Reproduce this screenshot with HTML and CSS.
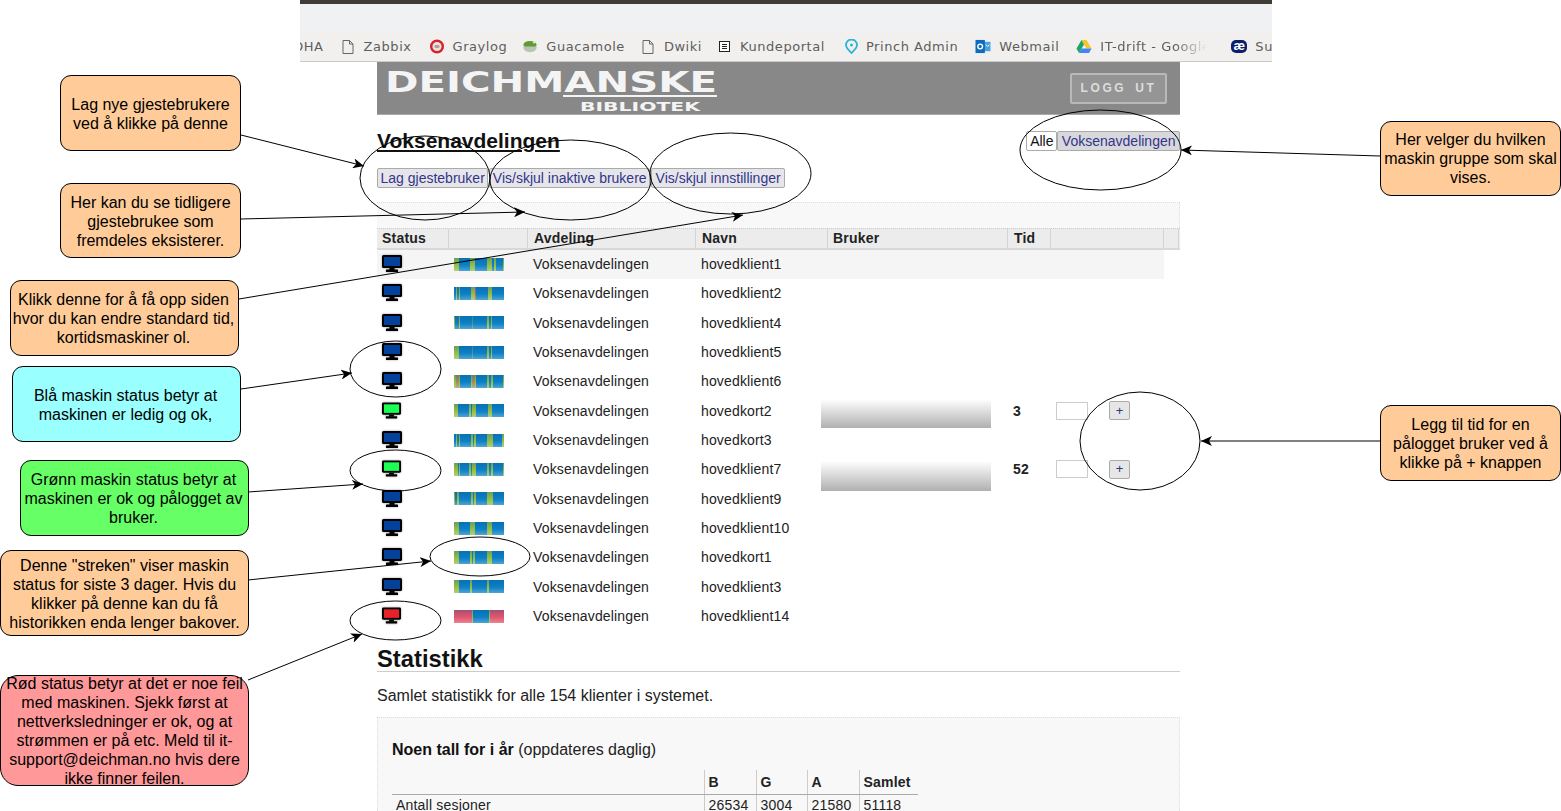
FILE: index.html
```html
<!DOCTYPE html>
<html lang="no">
<head>
<meta charset="utf-8">
<title>Deichmanske - klienter</title>
<link rel="stylesheet" href="styles.css">
</head>
<body>
<svg width="0" height="0" class="defs">
  <symbol id="mon" viewBox="0 0 20 17">
    <rect x="0" y="0" width="20" height="13" rx="1.5" fill="#000"/>
    <rect x="2" y="2" width="16" height="9" fill="currentColor"/>
    <rect x="7.5" y="13" width="5" height="2" fill="#000"/>
    <rect x="4" y="14.5" width="12" height="2.5" rx="0.6" fill="#000"/>
  </symbol>
  <symbol id="file" viewBox="0 0 12 14">
    <path d="M1 .5h6.500L11 4v9.500H1zM7.500 .5V4H11" fill="none" stroke="#666" stroke-width="1"/>
  </symbol>
</svg>

<div class="shot">
  <div class="topline"></div>
  <div class="urlbar"></div>
  <nav class="bookmarks">
    <span class="bm bm-first">OHA</span>
    <span class="bm bm-wide"><svg class="ic-file"><use href="#file"/></svg>Zabbix</span>
    <span class="bm bm-tight"><svg class="ic" viewBox="0 0 16 16"><circle cx="8" cy="8" r="6.200" fill="#e8e4e4" stroke="#d8232a" stroke-width="2.600"/><ellipse cx="8" cy="8" rx="3" ry="1.800" fill="#b99"/></svg>Graylog</span>
    <span class="bm"><svg class="ic" viewBox="0 0 16 16"><ellipse cx="8" cy="6" rx="7" ry="4" fill="#5f9a35"/><path d="M.8 8h14.400c0 4-3 6-7.200 6S.8 12 .8 8z" fill="#b8c4b4"/><circle cx="12.500" cy="3.500" r="1.400" fill="#e6e6c0"/></svg>Guacamole</span>
    <span class="bm bm-wide"><svg class="ic-file"><use href="#file"/></svg>Dwiki</span>
    <span class="bm bm-wide bm-doc"><svg class="ic-doc" viewBox="0 0 11 11"><rect x=".5" y=".5" width="10" height="10" fill="#fff" stroke="#222"/><path d="M3 3.500h5M3 5.500h5M3 7.500h5" stroke="#222"/></svg>Kundeportal</span>
    <span class="bm"><svg class="ic-pin" viewBox="0 0 13 15"><path d="M6.500 14C3.500 11 1 9 1 6a5.500 5.500 0 0 1 11 0c0 3-2.500 5-5.500 8z" fill="none" stroke="#2bb6d8" stroke-width="1.800"/><circle cx="6.500" cy="6" r="1.500" fill="#2bb6d8"/></svg>Princh Admin</span>
    <span class="bm"><svg class="ic" viewBox="0 0 16 16"><rect x="7" y="3" width="9" height="10" fill="#4aa3e0"/><rect x="0" y="1" width="10" height="14" fill="#0f6cbd"/><circle cx="5" cy="8" r="2.500" fill="none" stroke="#fff" stroke-width="1.500"/><path d="M11 6l2 2 2-2" stroke="#fff" fill="none"/></svg>Webmail</span>
    <span class="bm bm-fade"><svg class="ic" viewBox="0 0 16 15"><path d="M5.500 1h5l5 8.500h-5z" fill="#f8c52b"/><path d="M5.500 1L.5 9.500 3 14l5-8.500z" fill="#1fa463"/><path d="M3 14h10l2.500-4.500h-10z" fill="#4285f4"/></svg><span class="fade">IT-drift - Google</span></span>
    <span class="bm"><span class="ic-su">æ</span>Su</span>
  </nav>

  <main class="page">
    <header class="site-head">
      <svg class="logo" viewBox="0 0 345 53" width="345" height="53">
        <text x="8" y="30" class="logo-main" textLength="332" lengthAdjust="spacingAndGlyphs">DEICHMANSKE</text>
        <rect x="186" y="33" width="154" height="2" fill="#f4f4f4"/>
        <text x="203" y="49" class="logo-sub" textLength="120" lengthAdjust="spacingAndGlyphs">BIBLIOTEK</text>
      </svg>
      <a class="logout">LOGG UT</a>
    </header>

    <div class="title-row">
      <h1 class="title">Voksenavdelingen</h1>
      <div class="filters">
        <button class="btn btn-active">Alle</button><button class="btn btn-sel">Voksenavdelingen</button>
      </div>
    </div>

    <div class="toolbar">
      <button class="btn">Lag gjestebruker</button>
      <button class="btn">Vis/skjul inaktive brukere</button>
      <button class="btn btn-last">Vis/skjul innstillinger</button>
    </div>

    <div class="filter-panel"></div>

    <div class="thead">
      <div class="th">Status</div><div class="th"></div><div class="th">Avdeling</div><div class="th">Navn</div><div class="th">Bruker</div><div class="th">Tid</div><div class="th"></div><div class="th"></div>
    </div>

    <div class="row row-hl"><div class="c"><svg class="mon blue"><use href="#mon"/></svg></div><div class="c"><a class="bar h1"></a></div><div class="c">Voksenavdelingen</div><div class="c">hovedklient1</div></div>
    <div class="row"><div class="c"><svg class="mon blue"><use href="#mon"/></svg></div><div class="c"><a class="bar h2"></a></div><div class="c">Voksenavdelingen</div><div class="c">hovedklient2</div></div>
    <div class="row"><div class="c"><svg class="mon blue"><use href="#mon"/></svg></div><div class="c"><a class="bar h3"></a></div><div class="c">Voksenavdelingen</div><div class="c">hovedklient4</div></div>
    <div class="row"><div class="c"><svg class="mon blue"><use href="#mon"/></svg></div><div class="c"><a class="bar h4"></a></div><div class="c">Voksenavdelingen</div><div class="c">hovedklient5</div></div>
    <div class="row"><div class="c"><svg class="mon blue"><use href="#mon"/></svg></div><div class="c"><a class="bar h5"></a></div><div class="c">Voksenavdelingen</div><div class="c">hovedklient6</div></div>
    <div class="row"><div class="c"><svg class="mon green"><use href="#mon"/></svg></div><div class="c"><a class="bar h6"></a></div><div class="c">Voksenavdelingen</div><div class="c">hovedkort2</div>
      <div class="c"><div class="user-bar"></div></div><div class="c c-time">3</div><div class="c c-add"><input class="time" type="text"><button class="plus">+</button></div></div>
    <div class="row"><div class="c"><svg class="mon blue"><use href="#mon"/></svg></div><div class="c"><a class="bar h7"></a></div><div class="c">Voksenavdelingen</div><div class="c">hovedkort3</div></div>
    <div class="row"><div class="c"><svg class="mon green"><use href="#mon"/></svg></div><div class="c"><a class="bar h8"></a></div><div class="c">Voksenavdelingen</div><div class="c">hovedklient7</div>
      <div class="c"><div class="user-bar user-bar-low"></div></div><div class="c c-time">52</div><div class="c c-add"><input class="time" type="text"><button class="plus">+</button></div></div>
    <div class="row"><div class="c"><svg class="mon blue"><use href="#mon"/></svg></div><div class="c"><a class="bar h9"></a></div><div class="c">Voksenavdelingen</div><div class="c">hovedklient9</div></div>
    <div class="row"><div class="c"><svg class="mon blue"><use href="#mon"/></svg></div><div class="c"><a class="bar h10"></a></div><div class="c">Voksenavdelingen</div><div class="c">hovedklient10</div></div>
    <div class="row"><div class="c"><svg class="mon blue"><use href="#mon"/></svg></div><div class="c"><a class="bar h11"></a></div><div class="c">Voksenavdelingen</div><div class="c">hovedkort1</div></div>
    <div class="row"><div class="c"><svg class="mon blue"><use href="#mon"/></svg></div><div class="c"><a class="bar h12"></a></div><div class="c">Voksenavdelingen</div><div class="c">hovedklient3</div></div>
    <div class="row"><div class="c"><svg class="mon red"><use href="#mon"/></svg></div><div class="c"><a class="bar h13"></a></div><div class="c">Voksenavdelingen</div><div class="c">hovedklient14</div></div>

    <h2 class="stats-title">Statistikk</h2>
    <p class="stats-intro">Samlet statistikk for alle 154 klienter i systemet.</p>
    <section class="stats-panel">
      <h3 class="stats-head"><strong>Noen tall for i år</strong> (oppdateres daglig)</h3>
      <table class="stats-table">
        <colgroup><col class="col-label"><col class="col-b"><col class="col-g"><col class="col-a"><col class="col-s"></colgroup>
        <thead><tr><th></th><th>B</th><th>G</th><th>A</th><th>Samlet</th></tr></thead>
        <tbody><tr><td>Antall sesjoner</td><td>26534</td><td>3004</td><td>21580</td><td>51118</td></tr></tbody>
      </table>
    </section>
  </main>
</div>

<svg class="overlay" width="1561" height="811" viewBox="0 0 1561 811">
  <defs>
    <marker id="ah" markerWidth="12" markerHeight="10" refX="11" refY="5" orient="auto" markerUnits="userSpaceOnUse">
      <path d="M0 0L11 5L0 10L3 5z" fill="#000"/>
    </marker>
  </defs>
  <g class="ell">
    <ellipse cx="425" cy="178" rx="65" ry="42"/>
    <ellipse cx="570.500" cy="180" rx="80.500" ry="40"/>
    <ellipse cx="730.500" cy="173.500" rx="80.500" ry="40.500"/>
    <ellipse cx="1100.500" cy="150" rx="80.500" ry="40"/>
    <ellipse cx="395.500" cy="369" rx="45.500" ry="28"/>
    <ellipse cx="395.500" cy="470.500" rx="45.500" ry="20.500"/>
    <ellipse cx="480" cy="556.500" rx="50" ry="19.500"/>
    <ellipse cx="395.500" cy="620.500" rx="45.500" ry="19.500"/>
    <ellipse cx="1140" cy="441" rx="60" ry="49"/>
  </g>
  <g class="arr">
    <line x1="241" y1="135" x2="364" y2="166"/>
    <line x1="241" y1="219" x2="525" y2="212"/>
    <line x1="239" y1="299" x2="743" y2="215"/>
    <line x1="241" y1="389" x2="352" y2="373"/>
    <line x1="248" y1="492" x2="363" y2="484"/>
    <line x1="248" y1="580" x2="431" y2="561"/>
    <line x1="248" y1="680" x2="362" y2="634"/>
    <line x1="1380" y1="156" x2="1181" y2="150"/>
    <line x1="1380" y1="441" x2="1201" y2="441"/>
  </g>
</svg>

<div class="note n1">Lag nye gjestebrukere<br>ved å klikke på denne</div>
<div class="note n2">Her kan du se tidligere<br>gjestebrukee som<br>fremdeles eksisterer.</div>
<div class="note n3">Klikk denne for å få opp siden<br>hvor du kan endre standard tid,<br>kortidsmaskiner ol.</div>
<div class="note n4">Blå maskin status betyr at<br>maskinen er ledig og ok,</div>
<div class="note n5">Grønn maskin status betyr at<br>maskinen er ok og pålogget av<br>bruker.</div>
<div class="note n6">Denne "streken" viser maskin<br>status for siste 3 dager. Hvis du<br>klikker på denne kan du få<br>historikken enda lenger bakover.</div>
<div class="note n7">Rød status betyr at det er noe feil<br>med maskinen. Sjekk først at<br>nettverksledninger er ok, og at<br>strømmen er på etc. Meld til it-<br>support@deichman.no hvis dere<br>ikke finner feilen.</div>
<div class="note n8">Her velger du hvilken<br>maskin gruppe som skal<br>vises.</div>
<div class="note n9">Legg til tid for en<br>pålogget bruker ved å<br>klikke på + knappen</div>
</body>
</html>
```
FILE: styles.css
```css
* { box-sizing: border-box; }
html, body { margin: 0; padding: 0; }
body {
  position: relative;
  width: 1561px;
  height: 811px;
  overflow: hidden;
  background: #fff;
  font-family: "Liberation Sans", Arial, sans-serif;
  font-size: 14px;
  color: #222;
}
.defs { position: absolute; }

.shot { width: 972px; height: 811px; margin-left: 300px; overflow: hidden; }
.topline { height: 4px; background: #3f3c37; }
.urlbar { height: 28px; background: #eff1f2; }
.bookmarks {
  display: flex;
  align-items: center;
  gap: 17px;
  height: 30px;
  background: #f1f0ee;
  border-bottom: 1px solid #ccc;
  overflow: hidden;
  white-space: nowrap;
  font-family: "DejaVu Sans", sans-serif;
  font-size: 13px;
  letter-spacing: 0.55px;
  color: #5e5e5e;
}
.bm { display: inline-flex; align-items: center; gap: 8px; flex: none; }
.bm-wide { gap: 10px; }
.bm-first { margin-left: -7px; margin-right: 1px; }
.bm-tight { margin-right: -2px; }
.bm-doc { margin-right: 3px; }
.ic { width: 16px; height: 15px; flex: none; }
.ic-file { width: 12px; height: 14px; flex: none; }
.ic-doc { width: 11px; height: 11px; flex: none; }
.ic-pin { width: 13px; height: 15px; flex: none; }
.ic-su {
  width: 16px; height: 13px; flex: none; border-radius: 5px;
  background: #0c1f6b; color: #fff; font: bold 13px/12px "Liberation Sans", sans-serif;
  text-align: center; letter-spacing: 0;
}
.fade {
  display: block;
  width: 107px;
  overflow: hidden;
  -webkit-mask-image: linear-gradient(90deg, #000 70%, transparent 100%);
  mask-image: linear-gradient(90deg, #000 70%, transparent 100%);
}
.bm-fade { margin-right: 7px; }

.page { width: 803px; margin-left: 77px; }
.site-head {
  height: 53px;
  background: #888;
  border-bottom: 1px solid #aaa;
  display: flex;
  justify-content: space-between;
  align-items: flex-start;
}
.logo { display: block; flex: none; }
.logo-main { font: bold 28px "DejaVu Sans", sans-serif; fill: #f4f4f4; }
.logo-sub { font: bold 13px "DejaVu Sans", sans-serif; fill: #f4f4f4; }
.logout {
  margin: 11px 13px 0 0;
  width: 97px;
  height: 31px;
  border: 2px solid #b9b9b9;
  border-radius: 2px;
  background: #959595;
  color: #ddd;
  font-weight: bold;
  font-size: 12px;
  line-height: 26px;
  letter-spacing: 2.600px;
  word-spacing: 3px;
  text-align: center;
}

.title-row {
  display: flex;
  justify-content: space-between;
  align-items: flex-start;
  height: 21px;
  margin-top: 16px;
}
.title {
  margin: 0;
  font-size: 21px;
  line-height: 20px;
  font-weight: bold;
  color: #111;
  text-decoration: underline;
}
.filters { display: flex; }
.btn {
  height: 20px;
  margin: 0;
  padding: 0 2.500px;
  border: 1px solid #aaa;
  border-radius: 2px;
  background: #e6e6ea;
  color: #33358a;
  font-family: "Liberation Sans", Arial, sans-serif;
  font-size: 14px;
  line-height: 18px;
  white-space: nowrap;
}
.btn-active { width: 31px; background: #fff; color: #111; }
.btn-sel { padding: 0 3.500px; background: #d8d8dc; }
.btn-last { padding: 0 3.500px; }
.toolbar { display: flex; gap: 1px; margin-top: 16px; }

.filter-panel {
  height: 26px;
  margin-top: 14px;
  background: #f8f8f8;
  border-top: 1px dotted #ddd;
  border-right: 1px dotted #ddd;
}
.thead, .row {
  display: grid;
  grid-template-columns: 72px 79px 168px 132px 180px 43px 113px 15px;
}
.thead {
  height: 21.500px;
  background: #ececec;
  border-top: 1px dotted #ccc;
  border-bottom: 2px solid #d8d8d8;
  letter-spacing: 0.2px;
}
.th {
  border-right: 1px solid #d4d4d4;
  padding-left: 5px;
  font-weight: bold;
  font-size: 14px;
  line-height: 19px;
  color: #222;
}
.th:nth-child(3), .th:nth-child(4), .th:nth-child(6) { padding-left: 6px; }
.row {
  height: 29.330px;
  grid-template-rows: 29.330px;
  letter-spacing: 0.15px;
}
.row-hl { background: linear-gradient(90deg, #f5f5f5 787px, transparent 787px); }
.c { display: flex; align-items: center; padding-left: 5px; min-width: 0; min-height: 0; }

.mon { width: 20px; height: 17px; margin-bottom: 1px; filter: drop-shadow(0 0 1px rgba(0,0,0,.35)); }
.blue { color: #04419a; }
.green { color: #1bff55; width: 19px; }
.red { color: #e8222a; width: 19px; }

.bar {
  position: relative;
  display: block;
  width: 50px;
  height: 13px;
  overflow: hidden;
  --g: #93bf45;
  background-color: #0c74bb;
  filter: blur(0.4px);
}
.bar::after {
  content: "";
  position: absolute;
  inset: 0;
  background: linear-gradient(180deg, rgba(0,70,150,.28) 0%, rgba(0,70,150,0) 55%, rgba(255,255,255,.28) 100%);
}
.h1 { background-image: linear-gradient(90deg, var(--g) 0 5px, #0c80c4 5px 16px, var(--g) 16px 21px, #0c80c4 21px 33px, var(--g) 33px 38px, #0c80c4 38px 40px, var(--g) 40px 42px, #0c80c4 42px 49px, var(--g) 49px 50px); }
.h2 { background-image: linear-gradient(90deg, #0c80c4 0 2px, var(--g) 2px 3px, #0c80c4 3px 5px, var(--g) 5px 6px, #0c80c4 6px 17px, var(--g) 17px 21px, #c0568a 21px 22px, #0c80c4 22px 34px, var(--g) 34px 38px, #0c80c4 38px 50px); }
.h3 { background-image: linear-gradient(90deg, var(--g) 0 1px, #0c80c4 1px 5px, var(--g) 5px 6px, #0c80c4 6px 18px, #4f9a80 18px 19px, #0c80c4 19px 33px, var(--g) 33px 35px, #0c80c4 35px 37px, var(--g) 37px 38px, #0c80c4 38px 50px); }
.h4 { background-image: linear-gradient(90deg, var(--g) 0 5px, #0c80c4 5px 18px, #4f9a80 18px 19px, #0c80c4 19px 33px, var(--g) 33px 35px, #0c80c4 35px 37px, var(--g) 37px 38px, #0c80c4 38px 50px); }
.h5 { background-image: linear-gradient(90deg, var(--g) 0 2px, #a78a60 2px 5px, var(--g) 5px 6px, #0c80c4 6px 17px, var(--g) 17px 18px, #a78a60 18px 21px, var(--g) 21px 22px, #0c80c4 22px 33px, var(--g) 33px 35px, #0c80c4 35px 37px, var(--g) 37px 39px, #0c80c4 39px 49px, var(--g) 49px 50px); }
.h6 { background-image: linear-gradient(90deg, var(--g) 0 4px, #0c80c4 4px 6px, #0c80c4 6px 15px, var(--g) 15px 17px, #0c80c4 17px 18px, var(--g) 18px 22px, #0c80c4 22px 34px, var(--g) 34px 38px, #0c80c4 38px 50px); }
.h7 { background-image: linear-gradient(90deg, #0c80c4 0 2px, var(--g) 2px 3px, #0c80c4 3px 5px, var(--g) 5px 6px, #0c80c4 6px 17px, var(--g) 17px 19px, #0c80c4 19px 20px, var(--g) 20px 22px, #0c80c4 22px 33px, var(--g) 33px 39px, #0c80c4 39px 48px, var(--g) 48px 50px); }
.h8 { background-image: linear-gradient(90deg, var(--g) 0 4px, #0c80c4 4px 5px, var(--g) 5px 6px, #0c80c4 6px 15px, var(--g) 15px 17px, #0c80c4 17px 18px, var(--g) 18px 22px, #0c80c4 22px 33px, var(--g) 33px 35px, #0c80c4 35px 37px, var(--g) 37px 39px, #0c80c4 39px 49px, var(--g) 49px 50px); }
.h9 { background-image: linear-gradient(90deg, var(--g) 0 1px, #0c80c4 1px 3px, var(--g) 3px 5px, #0c80c4 5px 17px, var(--g) 17px 19px, #0c80c4 19px 20px, var(--g) 20px 22px, #0c80c4 22px 33px, var(--g) 33px 39px, #0c80c4 39px 50px); }
.h10 { background-image: linear-gradient(90deg, var(--g) 0 5px, #0c80c4 5px 16px, var(--g) 16px 21px, #0c80c4 21px 33px, var(--g) 33px 38px, #0c80c4 38px 50px); }
.h11 { background-image: linear-gradient(90deg, var(--g) 0 5px, #0c80c4 5px 16px, var(--g) 16px 18px, #0c80c4 18px 19px, var(--g) 19px 21px, #0c80c4 21px 33px, var(--g) 33px 38px, #0c80c4 38px 50px); }
.h12 { background-image: linear-gradient(90deg, var(--g) 0 5px, #0c80c4 5px 16px, var(--g) 16px 18px, #0c80c4 18px 33px, var(--g) 33px 35px, #0c80c4 35px 50px); }
.h13 { background-image: linear-gradient(90deg, #e2566c 0 18px, var(--g) 18px 19px, #0c80c4 19px 35px, var(--g) 35px 36px, #e2566c 36px 50px); }

.user-bar {
  flex: none;
  width: 170px;
  height: 29px;
  margin: 5px 0 0 -12px;
  background: linear-gradient(180deg, #fff 0%, #b0b0b0 100%);
}
.user-bar-low { height: 30px; margin-top: 13px; }
.c-time { font-weight: bold; }
.c-add { gap: 21px; }
.time {
  width: 32px;
  height: 18px;
  margin: 0;
  padding: 0;
  border: 1px solid #ccc;
  background: #fff;
}
.plus {
  width: 21px;
  height: 19px;
  margin: 0;
  padding: 0;
  border: 1px solid #aaa;
  border-radius: 2px;
  background: #e6e6e6;
  color: #33358a;
  font: 13px/16px "Liberation Sans", sans-serif;
}

.stats-title {
  margin: 14.500px 0 0;
  height: 27px;
  border-bottom: 1px solid #ccc;
  font-size: 23.800px;
  line-height: 27px;
  font-weight: bold;
  color: #111;
}
.stats-intro { margin: 15px 0 0; font-size: 16px; line-height: 17px; color: #222; }
.stats-panel {
  margin-top: 13px;
  padding: 23px 14px 0;
  height: 200px;
  background: #f8f8f8;
  border: 1px dotted #ddd;
}
.stats-head { margin: 0; font-size: 16px; line-height: 17px; font-weight: normal; color: #222; }
.stats-head strong { color: #111; }
.stats-table {
  margin-top: 12px;
  width: 526px;
  table-layout: fixed;
  border-collapse: collapse;
  font-size: 14px;
  letter-spacing: 0.2px;
}
.col-label { width: 312px; }
.col-b { width: 52px; }
.col-g { width: 51px; }
.col-a { width: 52px; }
.col-s { width: 59px; }
.stats-table th { height: 24px; padding: 0 4px; text-align: left; font-weight: bold; border-bottom: 1px solid #aaa; }
.stats-table td { height: 21px; padding: 0 4px; }
.stats-table th + th, .stats-table td + td { border-left: 1px solid #ccc; }

.overlay { position: absolute; left: 0; top: 0; pointer-events: none; }
.ell ellipse { fill: none; stroke: #000; stroke-width: 1; }
.arr line { stroke: #000; stroke-width: 1; marker-end: url(#ah); }

.note {
  position: absolute;
  display: flex;
  align-items: center;
  justify-content: center;
  text-align: center;
  white-space: nowrap;
  border: 1px solid #000;
  border-radius: 11px;
  background: #ffcc99;
  color: #000;
  font-size: 16px;
  line-height: 19px;
}
.n1 { left: 60px; top: 75px; width: 181px; height: 76px; padding-top: 2px; }
.n2 { left: 60px; top: 183px; width: 181px; height: 75px; padding-top: 2px; }
.n3 { left: 10px; top: 280px; width: 229px; height: 76px; padding-right: 2px; }
.n4 { left: 12px; top: 366px; width: 229px; height: 76px; padding: 2px 2px 0 0; background: #99ffff; }
.n5 { left: 20px; top: 460px; width: 229px; height: 76px; padding-right: 2px; background: #66ff66; }
.n6 { left: 0; top: 550px; width: 249px; height: 86px; padding-top: 2px; }
.n7 { left: 0; top: 675px; width: 249px; height: 111px; background: #ff9999; border-radius: 18px; }
.n8 { left: 1380px; top: 121px; width: 181px; height: 75px; }
.n9 { left: 1380px; top: 405px; width: 181px; height: 76px; }
```
